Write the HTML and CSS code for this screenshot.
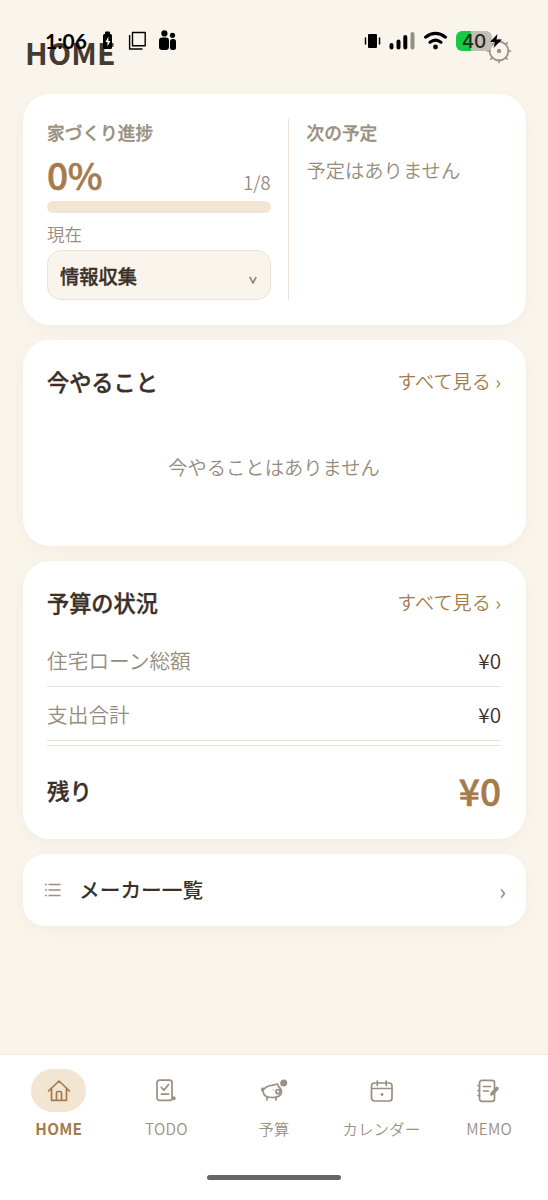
FILE: index.html
```html
<!DOCTYPE html>
<html lang="ja">
<head>
<meta charset="utf-8">
<title>HOME</title>
<link rel="stylesheet" href="styles.css">
</head>
<body>
<div class="screen">
  <header class="header">
    <h1 class="page-title">HOME</h1>
    <svg class="gear" viewBox="0 0 26 26" fill="none" stroke="#9a9080" stroke-width="1.7" stroke-linecap="round">
      <circle cx="13" cy="13" r="9.4"/><circle cx="13" cy="13" r="2.2" fill="#9a9080" stroke="none"/>
      <path d="M13 3.600V1.500M13 22.400v2.100M3.600 13H1.500M22.400 13h2.100M6.400 6.400L4.900 4.900M19.600 6.400l1.500-1.500M6.400 19.600l-1.500 1.500M19.600 19.600l1.500 1.500"/>
    </svg>
  </header>

  <div class="statusbar">
    <span class="clock">1:06</span>
    <svg class="status-left" viewBox="0 0 80 24">
      <rect x="4" y="5" width="9" height="15" rx="1.500"/><rect x="6" y="2.500" width="5" height="3" rx="1"/>
      <path d="M9.400 7.500L6.400 13h2v4.500l3-5.500h-2z" fill="#faf5ec"/>
      <path d="M33.500 3.500h12.700v13.200H33.500zM30.600 6v14h12.900" fill="none" stroke="#000" stroke-width="1.400" stroke-linejoin="round"/>
      <circle cx="65.400" cy="4.400" r="3.100"/><rect x="60" y="8.500" width="10" height="12.500" rx="3.200"/><circle cx="73.500" cy="6.300" r="2.600"/><rect x="71" y="10" width="6" height="11" rx="2.500"/>
    </svg>
    <svg class="status-right" viewBox="0 0 85 24">
      <rect x="4" y="5" width="9" height="14" rx="1"/><path d="M1.500 9v6M15.500 9v6" stroke="#000" stroke-width="1.500" stroke-linecap="round"/>
      <path d="M27.500 16v2.500M34.500 12.500v6M41.300 8v10.500" stroke="#000" stroke-width="4" stroke-linecap="round"/>
      <path d="M48.500 5v13.500" stroke="#929082" stroke-width="4" stroke-linecap="round"/>
      <path d="M61.500 8.200Q71.500.500 81.500 8.200M66 13.300Q71.500 9 77 13.300" fill="none" stroke="#000" stroke-width="3" stroke-linecap="round"/><circle cx="71.500" cy="18" r="2.400"/>
    </svg>
    <span class="battery">40</span>
    <svg class="bolt" viewBox="0 0 14 16"><path d="M8.500 1L1 9h5l-1.500 6L13 6.500H7.500z"/></svg>
  </div>

  <main class="content">
    <section class="card overview">
      <div class="progress">
        <h2 class="small-title">家づくり進捗</h2>
        <div class="progress-row"><span class="percent">0%</span><span class="steps">1/8</span></div>
        <div class="bar"></div>
        <div class="label">現在</div>
        <div class="select"><span>情報収集</span><svg class="caret" viewBox="0 0 8 8" fill="none" stroke="#928979" stroke-width="1.700"><path d="M.8.800L4 7 7.200.8"/></svg></div>
      </div>
      <div class="next">
        <h2 class="small-title">次の予定</h2>
        <p class="next-text">予定はありません</p>
      </div>
    </section>

    <section class="card todo">
      <div class="card-head"><h2>今やること</h2><a class="more">すべて見る ›</a></div>
      <p class="empty">今やることはありません</p>
    </section>

    <section class="card budget">
      <div class="card-head"><h2>予算の状況</h2><a class="more">すべて見る ›</a></div>
      <div class="row"><span class="row-name">住宅ローン総額</span><span>¥0</span></div>
      <div class="row"><span class="row-name">支出合計</span><span>¥0</span></div>
      <div class="total"><span>残り</span><span class="total-amount">¥0</span></div>
    </section>

    <section class="card makers">
      <svg class="list-icon" viewBox="0 0 18 16" stroke="#9a9080" stroke-width="1.400"><path d="M4.500 2.500h12M4.500 8h12M4.500 13.500h12M1 2.500h1.800M1 8h1.800M1 13.500h1.800"/></svg>
      <span class="makers-name">メーカー一覧</span>
      <span class="chevron">›</span>
    </section>
  </main>

  <nav class="tabs">
    <div class="tab active">
      <span class="pill"><svg viewBox="0 0 24 24"><path d="M1.500 12L12 2l10.500 10M4.500 9.500V21.300h15V9.500M9.500 21v-7q0-1.500 1.500-1.500h2q1.500 0 1.500 1.500v7"/></svg></span>
      <span class="tab-name">HOME</span>
    </div>
    <div class="tab">
      <span class="pill"><svg viewBox="0 0 24 24"><rect x="3" y="1.200" width="15" height="20.200" rx="2.500"/><path d="M7.300 8.200l2.600 2.900 4.600-5.500M7.500 15.200h7"/><circle cx="19.700" cy="19.300" r="1.200" fill="currentColor"/></svg></span>
      <span class="tab-name">TODO</span>
    </div>
    <div class="tab">
      <span class="pill"><svg class="pig" viewBox="0 0 28 24"><path d="M3.400 10.800C5.500 7.500 8.500 6.500 12 6.300L17.500 5 18.500 7.500Q21.500 9.500 21.500 13.500 20.500 18.500 12.500 18.500 3.500 18.500 3.300 13Q1.200 11.500 2.200 9.200L4 9.800M7 18.200v2.800M16 18.200v2.800"/><circle cx="18" cy="12.700" r="2"/><circle cx="23.700" cy="4" r="2.700" fill="currentColor"/><path d="M13.200 10.800v.4" stroke-width="1"/></svg></span>
      <span class="tab-name">予算</span>
    </div>
    <div class="tab">
      <span class="pill"><svg viewBox="0 0 24 24"><rect x="1.500" y="4" width="20.500" height="18" rx="3"/><path d="M1.800 9.500h20.200M7.300 2v4.500M16.200 2v4.500"/><circle cx="12" cy="15.500" r="1.400" fill="currentColor" stroke="none"/></svg></span>
      <span class="tab-name">カレンダー</span>
    </div>
    <div class="tab">
      <span class="pill"><svg viewBox="0 0 24 24"><rect x="2.500" y="1.300" width="15" height="21" rx="2.500"/><path d="M1 6.500h1.500M1 11.500h1.500M1 16.500h1.500M6.500 7.500h7M6.500 12h5"/><path d="M20 9.500l-4.800 5" stroke-width="3.600"/><path d="M14.700 14.500l-.7 1.500" stroke-width="1.600"/></svg></span>
      <span class="tab-name">MEMO</span>
    </div>
  </nav>
  <div class="home-indicator"></div>
</div>
</body>
</html>
```
FILE: styles.css
```css
* { box-sizing: border-box; }
body, h1, h2, p { margin: 0; }
body {
  background: #faf5ec;
  color: #3b3028;
  font-family: "Noto Sans CJK JP", sans-serif;
  font-weight: 350;
}
.screen { position: relative; display: flex; flex-direction: column; height: 1200px; overflow: hidden; }

.header { display: flex; justify-content: space-between; align-items: flex-start; height: 94px; padding: 30px 36px 0 25px; }
.page-title { font-size: 30px; line-height: 44px; font-weight: 700; color: #463a30; letter-spacing: .2px; }
.gear { width: 26px; height: 26px; margin-top: 8px; }

.statusbar { position: absolute; left: 0; top: 29px; width: 548px; height: 24px; display: flex; align-items: center; padding-left: 45px; color: #000; }
.clock { width: 54px; font: 700 21px/24px Lato, sans-serif; white-space: nowrap; }
.status-left { width: 80px; height: 24px; }
.status-right { width: 85px; height: 24px; margin-left: 185px; flex: none; }
.battery { width: 36px; height: 20px; margin-left: 7px; border-radius: 6px; background: linear-gradient(90deg, #16c943 43%, #c2bdb5 43%); font: 500 19px/21px Inter, sans-serif; text-align: center; color: #242920; }
.bolt { width: 14px; height: 16px; margin-left: -3px; }

.content { display: flex; flex-direction: column; gap: 15px; padding: 0 22.500px; }
.card { background: #fff; border-radius: 27px; padding: 25px 24.500px; box-shadow: 0 5px 16px rgba(130, 105, 60, .06); }
.small-title, .card-head h2, .select, .total, .percent { font-weight: 500; -webkit-text-stroke: .35px currentColor; }

.overview { display: flex; height: 230.500px; }
.progress { width: 242px; padding-right: 17.500px; border-right: 1px solid #ebe2d5; }
.next { padding-left: 17.500px; }
.small-title { font-size: 17.700px; line-height: 26px; height: 25px; color: #9a9080; }
.next-text { margin-top: 13px; font-size: 19.300px; line-height: 26px; color: #968c7d; }
.progress-row { display: flex; justify-content: space-between; align-items: baseline; height: 44px; margin-top: 7.500px; line-height: 44px; }
.percent { font-size: 37px; color: #a67b4c; letter-spacing: -.4px; -webkit-text-stroke-width: .6px; }
.steps { font-size: 18.300px; color: #968c7d; }
.bar { height: 12px; margin-top: 5.500px; border-radius: 6px; background: #f2e6d3; }
.label { margin-top: 8.500px; font-size: 17.500px; line-height: 24px; color: #968c7d; }
.select { display: flex; align-items: center; justify-content: space-between; height: 49.500px; margin-top: 4.500px; padding: 2px 13px 0 12px; border: 1px solid #ebe2d5; border-radius: 14px; background: #faf5ec; font-size: 19.300px; }
.caret { width: 8px; height: 8px; margin-top: 9px; }

.card-head { display: flex; justify-content: space-between; line-height: 32px; margin-bottom: 15px; }
.card-head h2 { font-size: 22.200px; }
.more { font-size: 19.200px; line-height: 33px; height: 32px; color: #a67b4c; }
.todo { height: 206px; }
.empty { font-size: 19.300px; line-height: 111px; text-align: center; color: #968c7d; }

.budget { height: 278.500px; }
.row { display: flex; justify-content: space-between; height: 54px; border-bottom: 1px solid #ebe2d5; font-size: 20.700px; line-height: 55px; }
.row-name { color: #968c7d; }
.total { display: flex; justify-content: space-between; margin-top: 4px; padding-top: 19px; border-top: 1px solid #ebe2d5; font-size: 22.500px; line-height: 50px; }
.total-amount { font-size: 37px; color: #a67b4c; -webkit-text-stroke-width: .6px; }

.makers { display: flex; align-items: center; height: 71.500px; padding: 0 19.500px 0 21px; border-radius: 22px; }
.list-icon { width: 18px; height: 16px; }
.makers-name { margin: -2px 0 0 17.500px; font-size: 20.700px; font-weight: 500; line-height: 30px; }
.chevron { margin-left: auto; font-size: 22px; font-weight: 400; color: #8f8576; line-height: 30px; }

.tabs { display: flex; height: 146px; margin-top: auto; padding: 14px 5px 0; background: #fff; border-top: 1px solid #f1e7da; color: #9a9080; }
.tab { flex: 1; display: flex; flex-direction: column; align-items: center; }
.pill { display: flex; align-items: center; justify-content: center; width: 55px; height: 43px; border-radius: 21.500px; }
.pill svg { width: 24px; height: 24px; fill: none; stroke: currentColor; stroke-width: 1.700; stroke-linecap: round; stroke-linejoin: round; }
.pill .pig { width: 28px; }
.tab-name { margin-top: 5px; font-size: 15.300px; line-height: 22px; letter-spacing: .3px; white-space: nowrap; }
.active { font-weight: 700; color: #a67b4c; }
.active .pill { background: #f2e6d3; }
.home-indicator { position: absolute; left: 207px; top: 1175px; width: 134px; height: 5px; border-radius: 3px; background: #666; }
```
